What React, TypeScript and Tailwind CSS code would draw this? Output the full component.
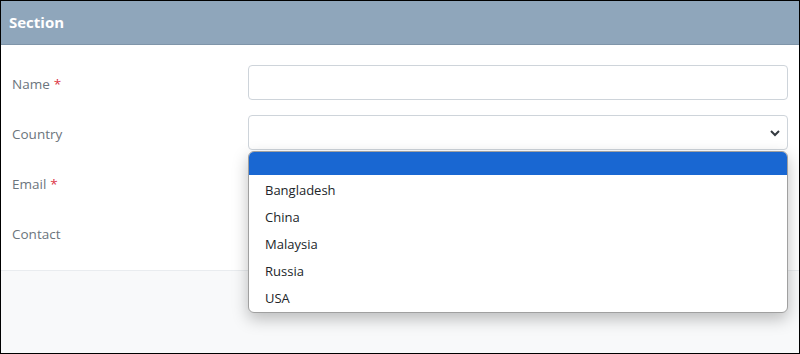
const countries = ['Bangladesh', 'China', 'Malaysia', 'Russia', 'USA'];

function Label({ text, required }: { text: string; required?: boolean }) {
  return (
    <div className="flex items-center pt-[4px] text-[13.5px] text-[#6c757d]">
      {text}
      {required && <span className="ml-1 text-[#dc3545]">*</span>}
    </div>
  );
}

function TextInput() {
  return <div className="h-[35px] rounded-[4px] border border-[#ced4da] bg-white" />;
}

export default function App() {
  return (
    <div
      className="flex h-[354px] w-[800px] flex-col border border-black bg-[#f8f9fa]"
      style={{ fontFamily: '"Open Sans", "Noto Sans", sans-serif' }}
    >
      {/* Header */}
      <div className="flex h-[44px] items-center border-b border-[#7f95a9] bg-[#8fa6bb] px-[8px]">
        <span className="text-[15px] font-bold text-white">Section</span>
      </div>

      {/* Form */}
      <div className="grid grid-cols-[236px_1fr] gap-y-[15px] border-b border-[#e9ecef] bg-white px-[11px] pt-[20px] pb-[20px]">
        <Label text="Name" required />
        <TextInput />

        <Label text="Country" />
        <div className="relative">
          <div className="flex h-[35px] items-center justify-end rounded-[4px] border border-[#ced4da] bg-white pr-[6px]">
            <svg width="12" height="12" viewBox="0 0 12 12">
              <path d="M2 4l4 4 4-4" fill="none" stroke="#343a40" strokeWidth="2" />
            </svg>
          </div>

          {/* Open list */}
          <div className="absolute top-[36px] left-0 right-0 z-10 overflow-hidden rounded-[6px] border border-[#a0a0a0] bg-white shadow-[0_6px_16px_rgba(0,0,0,0.25)]">
            <div className="h-[23px] bg-[#1967d2]" />
            <div className="pt-[2px]">
              {countries.map((c) => (
                <div key={c} className="flex h-[27px] items-center pl-[16px] text-[13px] text-[#212529]">
                  {c}
                </div>
              ))}
            </div>
          </div>
        </div>

        <Label text="Email" required />
        <TextInput />

        <Label text="Contact" />
        <TextInput />
      </div>

      <div className="flex-1" />
    </div>
  );
}
